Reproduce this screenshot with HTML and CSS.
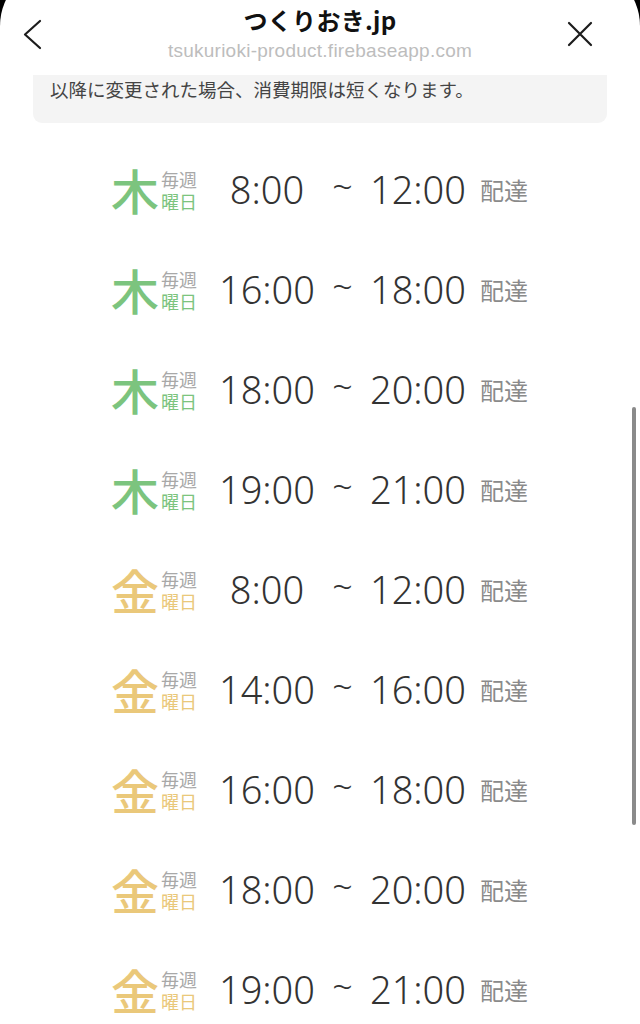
FILE: index.html
```html
<!DOCTYPE html>
<html lang="ja">
<head>
<meta charset="utf-8">
<title>つくりおき.jp</title>
<link rel="stylesheet" href="styles.css">
</head>
<body>
<div class="sheet">
  <header class="topbar">
    <svg class="nav-icon back" width="24" height="34" viewBox="0 0 24 34"><polyline points="18,4 3,17.5 18,31" fill="none" stroke="#1c1c1c" stroke-width="2.2" stroke-linecap="round" stroke-linejoin="round"/></svg>
    <div class="titles">
      <div class="title">つくりおき.jp</div>
      <div class="url">tsukurioki-product.firebaseapp.com</div>
    </div>
    <svg class="nav-icon close" width="26" height="26" viewBox="0 0 26 26"><path d="M2 2 L24 24 M24 2 L2 24" fill="none" stroke="#1c1c1c" stroke-width="2.2" stroke-linecap="round"/></svg>
  </header>
  <div class="notice">以降に変更された場合、消費期限は短くなります。</div>
  <ul class="slots">
    <li class="slot thu"><span class="day">木</span><span class="every"><span class="weekly">毎週</span><span class="yobi">曜日</span></span><span class="t start">8:00</span><span class="tilde">~</span><span class="t end">12:00</span><span class="deliv">配達</span></li>
    <li class="slot thu"><span class="day">木</span><span class="every"><span class="weekly">毎週</span><span class="yobi">曜日</span></span><span class="t start">16:00</span><span class="tilde">~</span><span class="t end">18:00</span><span class="deliv">配達</span></li>
    <li class="slot thu"><span class="day">木</span><span class="every"><span class="weekly">毎週</span><span class="yobi">曜日</span></span><span class="t start">18:00</span><span class="tilde">~</span><span class="t end">20:00</span><span class="deliv">配達</span></li>
    <li class="slot thu"><span class="day">木</span><span class="every"><span class="weekly">毎週</span><span class="yobi">曜日</span></span><span class="t start">19:00</span><span class="tilde">~</span><span class="t end">21:00</span><span class="deliv">配達</span></li>
    <li class="slot fri"><span class="day">金</span><span class="every"><span class="weekly">毎週</span><span class="yobi">曜日</span></span><span class="t start">8:00</span><span class="tilde">~</span><span class="t end">12:00</span><span class="deliv">配達</span></li>
    <li class="slot fri"><span class="day">金</span><span class="every"><span class="weekly">毎週</span><span class="yobi">曜日</span></span><span class="t start">14:00</span><span class="tilde">~</span><span class="t end">16:00</span><span class="deliv">配達</span></li>
    <li class="slot fri"><span class="day">金</span><span class="every"><span class="weekly">毎週</span><span class="yobi">曜日</span></span><span class="t start">16:00</span><span class="tilde">~</span><span class="t end">18:00</span><span class="deliv">配達</span></li>
    <li class="slot fri"><span class="day">金</span><span class="every"><span class="weekly">毎週</span><span class="yobi">曜日</span></span><span class="t start">18:00</span><span class="tilde">~</span><span class="t end">20:00</span><span class="deliv">配達</span></li>
    <li class="slot fri"><span class="day">金</span><span class="every"><span class="weekly">毎週</span><span class="yobi">曜日</span></span><span class="t start">19:00</span><span class="tilde">~</span><span class="t end">21:00</span><span class="deliv">配達</span></li>
  </ul>
  <div class="scrollbar"></div>
</div>
</body>
</html>
```

FILE: styles.css
```css
html, body {
  margin: 0;
  padding: 0;
  background: #000;
}
body {
  font-family: "Noto Sans CJK JP", "Noto Sans", sans-serif;
  overflow: hidden;
  height: 1024px;
}
.sheet {
  position: relative;
  background: #fff;
  margin-top: -34px;
  padding-top: 34px;
  border-radius: 60px 60px 0 0;
  height: 1100px;
}
.topbar {
  height: 75px;
  display: grid;
  grid-template-columns: 80px 1fr 80px;
  align-items: start;
}
.nav-icon.back {
  margin: 17px 0 0 22px;
}
.nav-icon.close {
  grid-column: 3;
  justify-self: start;
  margin: 21px 0 0 7px;
}
.titles {
  text-align: center;
  padding-top: 5px;
}
.title {
  font-size: 24px;
  font-weight: 700;
  color: #111;
  line-height: 30px;
  letter-spacing: 0.3px;
}
.url {
  font-family: "Liberation Sans", Arial, sans-serif;
  font-size: 19px;
  letter-spacing: 0.25px;
  color: #bdbdbd;
  line-height: 22px;
  margin-top: 5px;
}
.notice {
  margin: 0 33px;
  background: #f4f4f4;
  border-radius: 0 0 9px 9px;
  height: 48px;
  box-sizing: border-box;
  padding: 1px 0 0 17px;
  font-size: 18.5px;
  line-height: 26px;
  color: #444;
}
.slots {
  list-style: none;
  margin: 16px 0 0;
  padding: 0;
}
.slot {
  height: 100px;
  display: flex;
  align-items: center;
  justify-content: center;
  padding-right: 1px;
}
.day {
  font-size: 48px;
  line-height: 1;
  font-weight: 500;
}
.thu .day, .thu .yobi { color: #7cc47e; }
.fri .day, .fri .yobi { color: #eac87a; }
.every {
  display: flex;
  flex-direction: column;
  font-size: 18px;
  line-height: 22px;
  margin-left: 2px;
  margin-top: 2px;
}
.weekly { color: #a8a8a8; }
.t {
  font-family: "Noto Sans", sans-serif;
  font-size: 38px;
  font-weight: 300;
  color: #333;
  width: 100px;
  text-align: center;
  line-height: 1;
}
.start { margin-left: 20px; }
.tilde {
  font-family: "Noto Sans", sans-serif;
  width: 51px;
  text-align: center;
  font-size: 36px;
  font-weight: 300;
  color: #333;
  line-height: 1;
  margin-top: -4px;
}
.deliv {
  font-size: 24px;
  color: #8a8a8a;
  margin-left: 12px;
  line-height: 1;
  margin-top: 2px;
}
.scrollbar {
  position: absolute;
  left: 632px;
  top: 441px;
  width: 4px;
  height: 418px;
  border-radius: 2px;
  background: #8a8a8a;
}
```
